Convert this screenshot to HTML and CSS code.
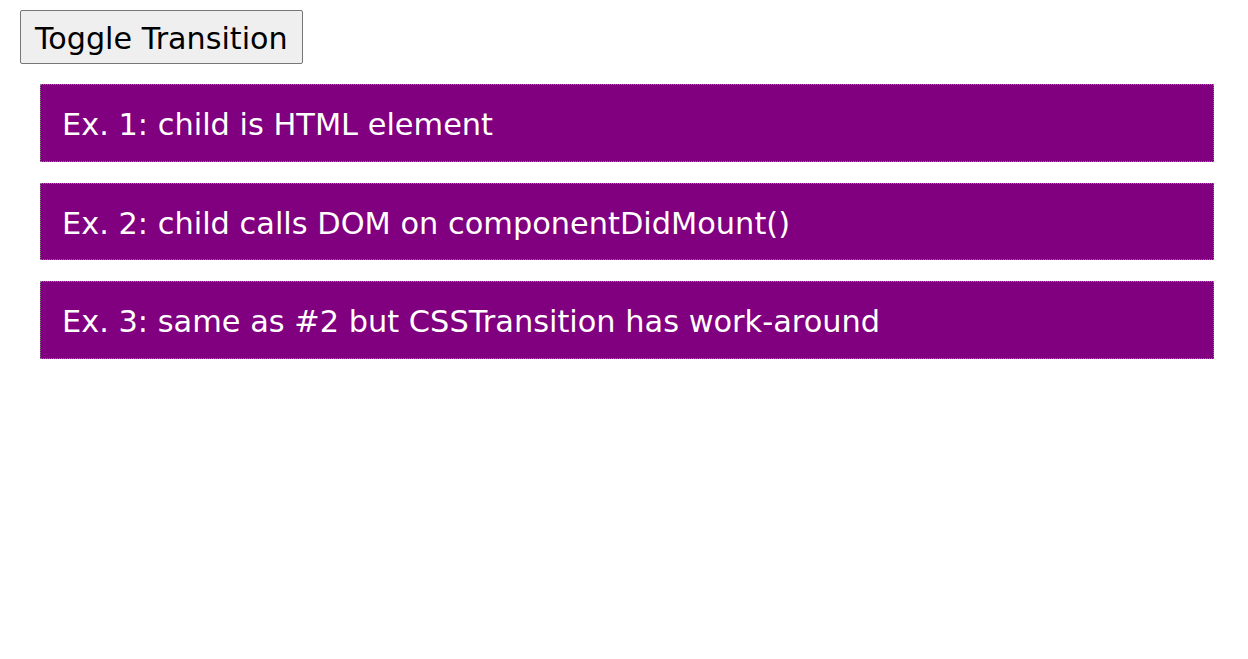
FILE: index.html
```html
<!DOCTYPE html>
<html>
<head>
<meta charset="utf-8">
<link rel="stylesheet" href="styles.css">
</head>
<body>
<button class="toggle">Toggle Transition</button>
<div class="examples">
  <div class="example">Ex. 1: child is HTML element</div>
  <div class="example">Ex. 2: child calls DOM on componentDidMount()</div>
  <div class="example">Ex. 3: same as #2 but CSSTransition has work-around</div>
</div>
</body>
</html>
```
FILE: styles.css
```css
html, body {
  margin: 0;
  background: #fff;
}
body {
  padding: 10px 34px 0 20px;
  font-family: "DejaVu Sans", Verdana, sans-serif;
}
.toggle {
  display: block;
  font-family: "DejaVu Sans", Verdana, sans-serif;
  font-size: 30.2px;
  line-height: 35px;
  color: #000;
  background: #efefef;
  border: 1px solid #767676;
  border-radius: 2px;
  padding: 10px 14px 7px;
  margin: 0;
}
.examples {
  margin: 20px 0 0 20px;
  display: flex;
  flex-direction: column;
  gap: 21px;
}
.example {
  background: #800080;
  color: #fff;
  border: 1px dotted #808080;
  font-size: 30.4px;
  line-height: 35.5px;
  padding: 22px 21px 18px;
}
```
